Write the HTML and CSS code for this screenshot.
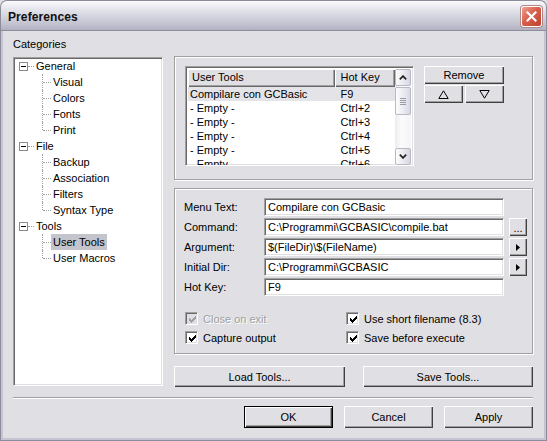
FILE: index.html
```html
<!DOCTYPE html>
<html>
<head>
<meta charset="utf-8">
<title>Preferences</title>
<link rel="stylesheet" href="styles.css">
</head>
<body>
<div class="window">
  <div class="titlebar">
    <span class="title">Preferences</span>
    <div class="close">
      <svg width="11" height="11" viewBox="0 0 11 11"><path d="M1.5 1.5 L9.5 9.5 M9.5 1.5 L1.5 9.5" stroke="#fff" stroke-width="2.2" stroke-linecap="square" fill="none"/></svg>
    </div>
  </div>
  <div class="client">
    <div class="main">
      <div class="left">
        <div class="label">Categories</div>
        <div class="tree sunken">
          <div class="row node"><span class="exp"><i></i></span><span class="hline"></span><span class="txt">General</span></div>
          <div class="row child"><span class="conn"></span><span class="txt">Visual</span></div>
          <div class="row child"><span class="conn"></span><span class="txt">Colors</span></div>
          <div class="row child"><span class="conn"></span><span class="txt">Fonts</span></div>
          <div class="row child"><span class="conn last"></span><span class="txt">Print</span></div>
          <div class="row node"><span class="exp"><i></i></span><span class="hline"></span><span class="txt">File</span></div>
          <div class="row child"><span class="conn"></span><span class="txt">Backup</span></div>
          <div class="row child"><span class="conn"></span><span class="txt">Association</span></div>
          <div class="row child"><span class="conn"></span><span class="txt">Filters</span></div>
          <div class="row child"><span class="conn last"></span><span class="txt">Syntax Type</span></div>
          <div class="row node"><span class="exp"><i></i></span><span class="hline"></span><span class="txt">Tools</span></div>
          <div class="row child"><span class="conn"></span><span class="txt sel">User Tools</span></div>
          <div class="row child"><span class="conn last"></span><span class="txt">User Macros</span></div>
        </div>
      </div>
      <div class="right">
        <div class="group g1">
          <div class="listview sunken">
            <div class="lv-body">
              <div class="lv-head">
                <div class="hcell c1">User Tools</div>
                <div class="hcell c2">Hot Key</div>
              </div>
              <div class="lv-row selrow"><span class="c1">Compilare con GCBasic</span><span class="c2">F9</span></div>
              <div class="lv-row"><span class="c1">- Empty -</span><span class="c2">Ctrl+2</span></div>
              <div class="lv-row"><span class="c1">- Empty -</span><span class="c2">Ctrl+3</span></div>
              <div class="lv-row"><span class="c1">- Empty -</span><span class="c2">Ctrl+4</span></div>
              <div class="lv-row"><span class="c1">- Empty -</span><span class="c2">Ctrl+5</span></div>
              <div class="lv-row"><span class="c1">- Empty -</span><span class="c2">Ctrl+6</span></div>
            </div>
            <div class="scrollbar">
              <div class="sb-btn"><svg width="8" height="5" viewBox="0 0 8 5"><path d="M0.8 4.3 L4 1.1 L7.2 4.3" stroke="#222" stroke-width="1.7" fill="none"/></svg></div>
              <div class="sb-track">
                <div class="sb-thumb"><i></i><i></i><i></i><i></i></div>
              </div>
              <div class="sb-btn"><svg width="8" height="5" viewBox="0 0 8 5"><path d="M0.8 0.7 L4 3.9 L7.2 0.7" stroke="#222" stroke-width="1.7" fill="none"/></svg></div>
            </div>
          </div>
          <div class="lv-buttons">
            <button class="btn remove">Remove</button>
            <div class="arrows">
              <button class="btn"><svg width="11" height="9" viewBox="0 0 11 9"><path d="M5.5 0.8 L10.2 8.5 L0.8 8.5 Z" stroke="#000" stroke-width="1" fill="none"/></svg></button>
              <button class="btn"><svg width="11" height="9" viewBox="0 0 11 9"><path d="M0.8 0.5 L10.2 0.5 L5.5 8.2 Z" stroke="#000" stroke-width="1" fill="none"/></svg></button>
            </div>
          </div>
        </div>
        <div class="group g2">
          <div class="form">
            <label>Menu Text:</label><div class="input sunken">Compilare con GCBasic</div><span></span>
            <label>Command:</label><div class="input sunken">C:\Programmi\GCBASIC\compile.bat</div><button class="btn side dots">...</button>
            <label>Argument:</label><div class="input sunken">$(FileDir)\$(FileName)</div><button class="btn side"><svg width="4" height="7" viewBox="0 0 4 7"><path d="M0 0 L4 3.5 L0 7 Z" fill="#000"/></svg></button>
            <label>Initial Dir:</label><div class="input sunken">C:\Programmi\GCBASIC</div><button class="btn side"><svg width="4" height="7" viewBox="0 0 4 7"><path d="M0 0 L4 3.5 L0 7 Z" fill="#000"/></svg></button>
            <label>Hot Key:</label><div class="input sunken">F9</div><span></span>
          </div>
          <div class="checks">
            <div class="check disabled"><span class="box sunken"><svg width="7" height="7" viewBox="0 0 7 7"><path d="M0 2h1v3H0zM1 3h1v3H1zM2 4h1v3H2zM3 3h1v3H3zM4 2h1v3H4zM5 1h1v3H5zM6 0h1v3H6z"/></svg></span><span class="ctext">Close on exit</span></div>
            <div class="check"><span class="box sunken"><svg width="7" height="7" viewBox="0 0 7 7"><path d="M0 2h1v3H0zM1 3h1v3H1zM2 4h1v3H2zM3 3h1v3H3zM4 2h1v3H4zM5 1h1v3H5zM6 0h1v3H6z"/></svg></span><span class="ctext">Use short filename (8.3)</span></div>
            <div class="check"><span class="box sunken"><svg width="7" height="7" viewBox="0 0 7 7"><path d="M0 2h1v3H0zM1 3h1v3H1zM2 4h1v3H2zM3 3h1v3H3zM4 2h1v3H4zM5 1h1v3H5zM6 0h1v3H6z"/></svg></span><span class="ctext">Capture output</span></div>
            <div class="check"><span class="box sunken"><svg width="7" height="7" viewBox="0 0 7 7"><path d="M0 2h1v3H0zM1 3h1v3H1zM2 4h1v3H2zM3 3h1v3H3zM4 2h1v3H4zM5 1h1v3H5zM6 0h1v3H6z"/></svg></span><span class="ctext">Save before execute</span></div>
          </div>
        </div>
        <div class="loadsave">
          <button class="btn load">Load Tools...</button>
          <button class="btn save">Save Tools...</button>
        </div>
      </div>
    </div>
    <div class="sep"></div>
    <div class="footer">
      <button class="btn default">OK</button>
      <button class="btn">Cancel</button>
      <button class="btn">Apply</button>
    </div>
  </div>
</div>
</body>
</html>
```
FILE: styles.css
```css
* { box-sizing: border-box; margin: 0; padding: 0; }
html, body { width: 547px; height: 441px; overflow: hidden; }
body {
  font-family: "Liberation Sans", Arial, sans-serif;
  font-size: 11px;
  color: #000;
  background: #e0dfe3;
}
.window {
  width: 547px;
  height: 441px;
  display: flex;
  flex-direction: column;
  background: #e0dfe3;
}

/* title bar */
.titlebar {
  height: 30px;
  flex: none;
  display: flex;
  align-items: center;
  justify-content: space-between;
  padding: 2px 4px 0 7px;
  border: 1px solid #8c8c9c;
  border-bottom: none;
  border-radius: 7px 7px 0 0;
  background: linear-gradient(#fbfbfd 0%, #ececf2 18%, #d6d6e0 50%, #c2c2d0 80%, #b0b0c2 100%);
}
.title {
  font-family: "Liberation Sans", Arial, sans-serif;
  font-weight: bold;
  font-size: 12px;
  color: #101010;
  letter-spacing: 0.1px;
}
.close {
  width: 21px;
  height: 21px;
  border: 1px solid #fff;
  border-radius: 3px;
  display: flex;
  align-items: center;
  justify-content: center;
  background: linear-gradient(135deg, #f0a090 0%, #d8604c 45%, #c04030 100%);
  box-shadow: 0 0 0 1px #b08888;
}

/* client */
.client {
  flex: 1;
  display: flex;
  flex-direction: column;
  border: 3px solid #c4c4d2;
  border-top: none;
  padding: 7px 11px 10px 10px;
  outline: 1px solid #8c8c9c;
  outline-offset: -1px;
}
.main { display: flex; gap: 11px; height: 350px; }
.left { width: 150px; }
.label { height: 14px; line-height: 14px; margin-bottom: 6px; padding-left: 0; }

.sunken {
  border: 1px solid;
  border-color: #a0a0a0 #fff #fff #a0a0a0;
  box-shadow: inset 1px 1px #696969, inset -1px -1px #e0dfe3;
}

/* tree */
.tree {
  width: 150px;
  height: 329px;
  background: #fff;
  padding: 0 1px 1px 2px;
}
.row { height: 16px; display: flex; align-items: center; }
.node { padding-left: 3px; }
.exp {
  width: 9px; height: 9px;
  border: 1px solid #8a8a8a;
  background: #fff;
  display: flex; align-items: center; justify-content: center;
}
.exp i { display: block; width: 5px; height: 1px; background: #000; }
.hline { width: 6px; height: 1px; border-top: 1px dotted #a0a0a0; }
.txt { padding: 0 2px; height: 16px; line-height: 16px; }
.child { padding-left: 26px; }
.conn { width: 9px; height: 16px; position: relative; }
.conn::before {
  content: ""; position: absolute; left: 0; top: 0; bottom: 0;
  border-left: 1px dotted #a0a0a0;
}
.conn.last::before { bottom: 8px; }
.conn::after {
  content: ""; position: absolute; left: 1px; top: 8px; width: 8px;
  border-top: 1px dotted #a0a0a0;
}
.sel { background: #c4c4cc; }

/* right column */
.right { width: 359px; padding-top: 19px; display: flex; flex-direction: column; }
.group {
  border: 1px solid #a0a0a0;
  box-shadow: inset 1px 1px #fff, 1px 1px #fff;
}
.g1 { height: 124px; display: flex; align-items: flex-start; padding: 9px 0 0 10px; }
.g2 { height: 166px; margin-top: 8px; padding: 9px 0 0 9px; }

/* list view */
.listview {
  width: 229px; height: 100px; background: #fff;
  display: flex; padding: 2px; overflow: hidden;
}
.lv-body { width: 209px; height: 96px; overflow: hidden; }
.lv-head { display: flex; height: 18px; }
.hcell {
  height: 18px; line-height: 17px; background: #e0dfe3;
  box-shadow: inset 1px 1px #fff, inset -1px -1px #696969, inset -2px -2px #a0a0a0;
}
.hcell.c1 { width: 148px; padding-left: 4px; }
.hcell.c2 { width: 61px; padding-left: 6px; }
.lv-row { display: flex; height: 14px; line-height: 14px; }
.lv-row .c1 { width: 148px; padding-left: 2px; }
.lv-row .c2 { width: 61px; padding-left: 6px; }
.selrow { background: #e4e4e8; }

.scrollbar { width: 16px; height: 96px; display: flex; flex-direction: column; background: #f4f4f6; }
.sb-btn {
  width: 16px; height: 17px;
  border: 1px solid #b8b8c6; border-radius: 2px;
  background: linear-gradient(90deg, #fdfdfe, #e6e6ee 60%, #d6d6e0);
  display: flex; align-items: center; justify-content: center;
}
.sb-track { flex: 1; padding-top: 1px; background: linear-gradient(90deg, #ececf0, #fbfbfc 40%, #f4f4f6); }
.sb-thumb {
  height: 28px;
  border: 1px solid #b8b8c6; border-radius: 2px;
  background: linear-gradient(90deg, #fdfdfe, #e8e8ef 60%, #d8d8e2);
  display: flex; flex-direction: column; align-items: center; justify-content: center; gap: 1px;
}
.sb-thumb i { display: block; width: 6px; height: 1px; background: #9a9aa8; }

.lv-buttons { margin-left: 10px; width: 80px; margin-top: 0; }
.arrows { display: grid; grid-template-columns: 39px 39px; gap: 2px; margin-top: 1px; }

/* buttons */
.btn {
  font-family: "Liberation Sans", Arial, sans-serif;
  font-size: 11px; color: #000;
  background: #e0dfe3;
  border: none;
  box-shadow: inset 1px 1px #fff, inset -1px -1px #404040, inset -2px -2px #a0a0a0;
  display: flex; align-items: center; justify-content: center;
}
.remove { width: 80px; height: 18px; }
.arrows .btn { height: 18px; }

/* form */
.form {
  display: grid;
  grid-template-columns: 75px 240px 18px;
  grid-auto-rows: 18px;
  column-gap: 5px;
  row-gap: 2px;
  align-items: stretch;
}
.form label { line-height: 18px; }
.input {
  background: #fff;
  padding: 0 3px;
  line-height: 16px;
  white-space: nowrap;
  overflow: hidden;
}
.side { width: 18px; height: 18px; }
.dots { align-items: flex-end; padding-bottom: 4px; line-height: 8px; }

.checks {
  display: grid;
  grid-template-columns: 161px 161px;
  grid-auto-rows: 19px;
  margin-top: 13px;
  padding-left: 1px;
}
.check { display: flex; align-items: center; }
.box {
  width: 13px; height: 13px; background: #fff;
  display: flex; align-items: center; justify-content: center;
  padding: 1px 0 0 1px;
}
.box svg { fill: #000; }
.ctext { margin-left: 5px; }
.disabled .box { background: #e0dfe3; }
.disabled .box svg { fill: #a0a0a0; }
.disabled .ctext { color: #a0a0a0; text-shadow: 1px 1px #fff; }

.loadsave { display: flex; justify-content: space-between; margin-top: 12px; }
.load { width: 171px; height: 21px; }
.save { width: 170px; height: 21px; }

.sep { height: 2px; margin-top: 10px; border-top: 1px solid #a0a0a0; border-bottom: 1px solid #fff; }
.footer { display: flex; justify-content: flex-end; gap: 11px; margin-top: 7px; }
.footer .btn { width: 89px; height: 22px; }
.footer .default {
  border: 1px solid #000;
  box-shadow: inset 1px 1px #fff, inset -1px -1px #404040, inset -2px -2px #a0a0a0;
}
```
